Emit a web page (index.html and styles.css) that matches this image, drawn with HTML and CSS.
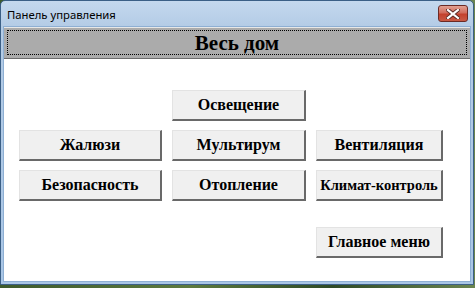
FILE: index.html
```html
<!DOCTYPE html>
<html lang="ru">
<head>
    <meta charset="UTF-8">
    <title>Панель управления</title>
    <link rel="stylesheet" href="styles.css">
</head>
<body>
    <div class="window">
        <div class="titlebar">
            <span class="title">Панель управления</span>
            <button class="close" title="Закрыть">
                <svg width="14" height="10" viewBox="0 0 14 10">
                    <path d="M2 1 L12 9 M12 1 L2 9" stroke="#5a2a26" stroke-width="4" stroke-linecap="square"/>
                    <path d="M2 1 L12 9 M12 1 L2 9" stroke="#ffffff" stroke-width="2.2" stroke-linecap="square"/>
                </svg>
            </button>
        </div>
        <div class="client">
            <div class="header"><div class="focus">Весь дом</div></div>
            <div class="grid">
                <button class="btn col2">Освещение</button>
                <button class="btn col1">Жалюзи</button>
                <button class="btn">Мультирум</button>
                <button class="btn">Вентиляция</button>
                <button class="btn">Безопасность</button>
                <button class="btn">Отопление</button>
                <button class="btn narrow">Климат-контроль</button>
                <button class="btn col3 menu">Главное меню</button>
            </div>
        </div>
    </div>
</body>
</html>
```

FILE: styles.css
```css
body {
    margin: 0;
    width: 475px;
    height: 288px;
    background: linear-gradient(90deg, #3d5a2c, #5d7a3e 40%, #2e4a26 70%, #6b8550);
    overflow: hidden;
}
.window {
    width: 474px;
    height: 285px;
    box-sizing: border-box;
    border: 1px solid #3b5f86;
    border-radius: 5px 5px 0 0;
    background: linear-gradient(#c4d8ee, #b4cce6 25px, #a9c6e6);
    padding: 0 2px 2px 2px;
    display: flex;
    flex-direction: column;
}
.titlebar {
    height: 25px;
    display: flex;
    align-items: flex-start;
    padding-left: 4px;
}
.title {
    font-family: "Noto Sans", sans-serif;
    font-size: 11.3px;
    color: #000;
    margin-top: 6px;
}
.close {
    margin-left: auto;
    margin-top: 4px;
    margin-right: 3px;
    width: 30px;
    height: 17px;
    padding: 0;
    border: 1px solid #6b2a25;
    border-radius: 3px;
    background: linear-gradient(#e2a193, #d16c5c 45%, #c4412d 55%, #c85a45);
    display: flex;
    align-items: center;
    justify-content: center;
}
.client {
    flex: 1;
    background: #fff;
    border: 1px solid #8eafd3;
}
.header {
    height: 32px;
    background: #ababab;
    border-top: 1px solid #e8e8e8;
    border-bottom: 1px solid #6b6b6b;
    box-sizing: border-box;
    padding: 2px 3px 3px 3px;
}
.focus {
    height: 100%;
    box-sizing: border-box;
    border: 1px dotted #000;
    font-family: "Liberation Serif", serif;
    font-weight: bold;
    font-size: 21px;
    text-align: center;
    line-height: 24px;
    color: #000;
}
.grid {
    display: grid;
    grid-template-columns: 143px 134px 127px;
    grid-template-rows: 31px 31px 31px 48px;
    column-gap: 10px;
    row-gap: 9px;
    padding-left: 15px;
    margin-top: 31px;
}
.btn {
    font-family: "Liberation Serif", serif;
    font-weight: bold;
    font-size: 16px;
    color: #000;
    background: #f0f0f0;
    border-style: solid;
    border-width: 1px 2px 2px 1px;
    border-color: #e3e3e3 #696969 #696969 #e3e3e3;
    padding: 0;
    margin: 0;
    white-space: nowrap;
}
.narrow {
    font-size: 14.5px;
}
.col1 {
    grid-column: 1;
}
.col2 {
    grid-column: 2;
}
.col3 {
    grid-column: 3;
}
.menu {
    height: 31px;
    align-self: end;
}
```
